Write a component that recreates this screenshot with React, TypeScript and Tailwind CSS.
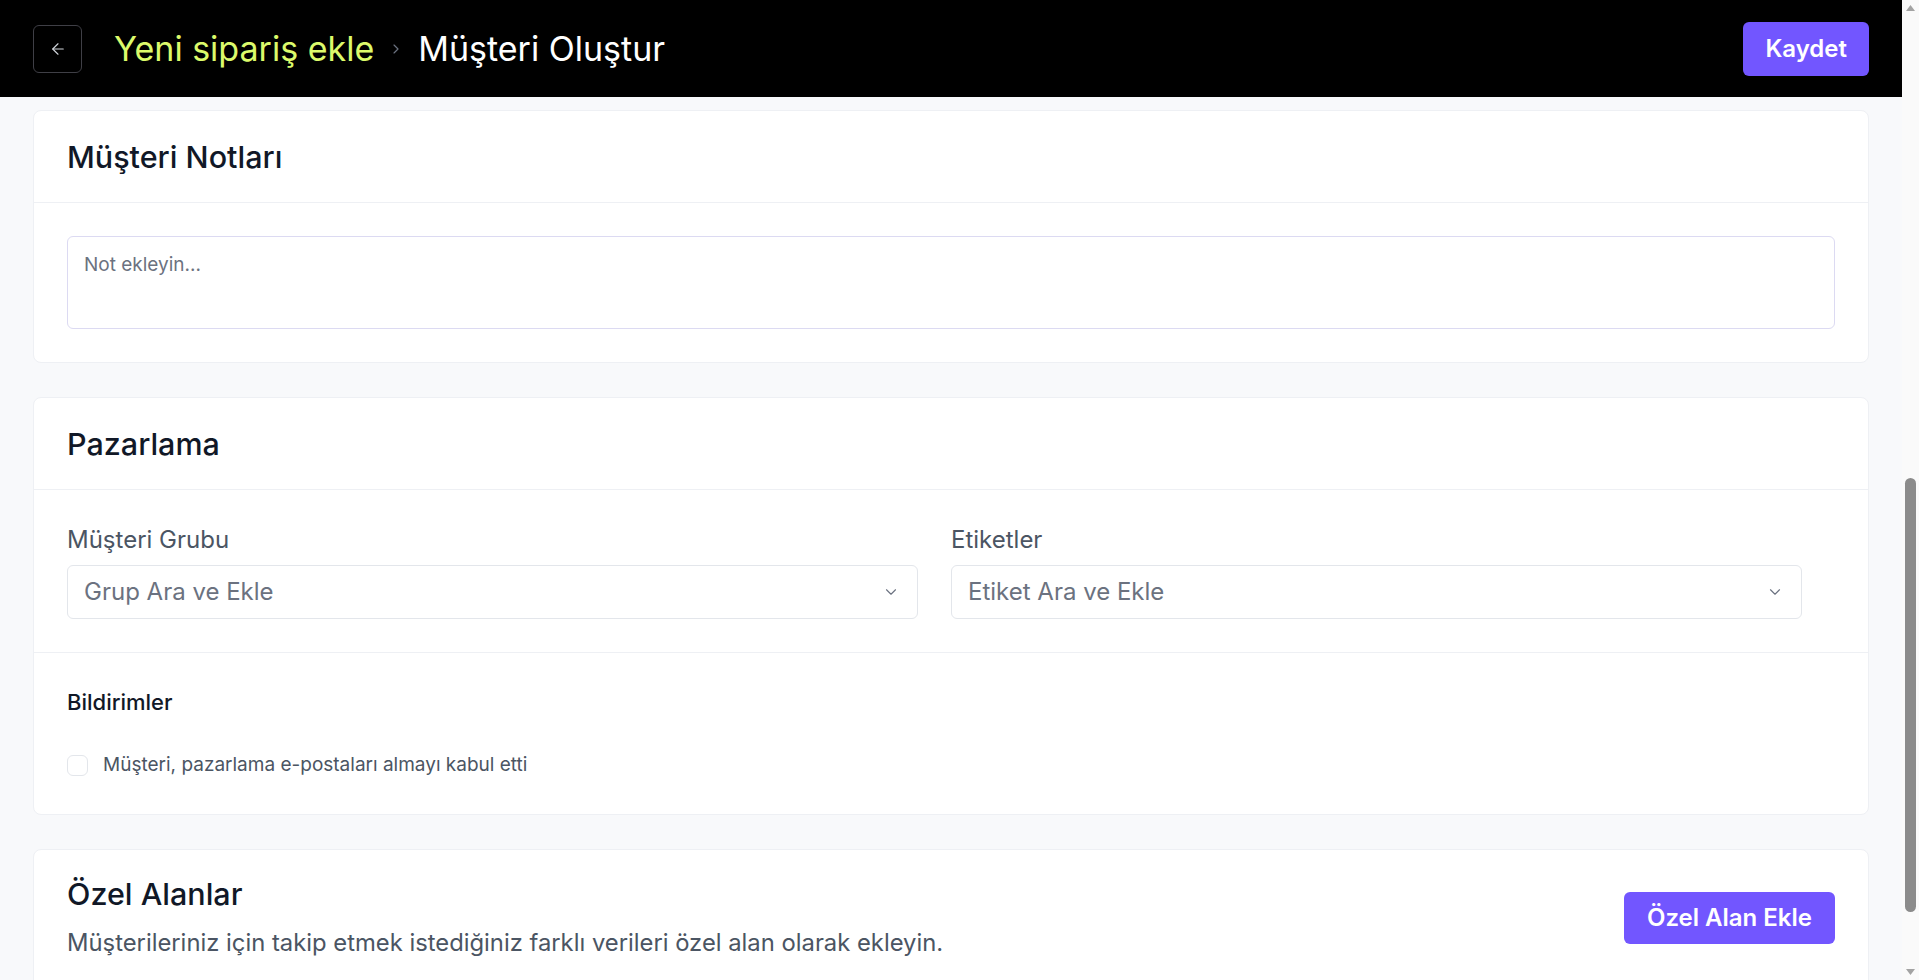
import React from "react";
import { ArrowLeft, ChevronRight, ChevronDown } from "lucide-react";

function SelectBox({ placeholder }: { placeholder: string }) {
  return (
    <div className="flex h-[54px] items-center justify-between rounded-md border border-[#E3E6EB] bg-white pl-[16px] pr-[17px]">
      <span className="text-[24px] leading-none text-[#6B7280]">{placeholder}</span>
      <ChevronDown size={18} strokeWidth={1.5} className="text-[#6B7280]" />
    </div>
  );
}

function FakeScrollbar() {
  return (
    <div className="fixed top-0 right-0 z-20 h-screen w-[17px] bg-[#FAFAFA]">
      <svg className="absolute top-[5px] left-[4px]" width="9" height="6" viewBox="0 0 9 6">
        <polygon points="4.5,0 9,6 0,6" fill="#A3A3A3" />
      </svg>
      <div className="absolute top-[478px] left-[3px] h-[434px] w-[11px] rounded-full bg-[#8B8B8B]" />
      <svg className="absolute bottom-[5px] left-[4px]" width="9" height="6" viewBox="0 0 9 6">
        <polygon points="0,0 9,0 4.5,6" fill="#A3A3A3" />
      </svg>
    </div>
  );
}

export default function App() {
  return (
    <div
      className="min-h-screen bg-[#F8F9FB] pr-[17px] text-[#111827]"
      style={{ fontFamily: "Inter, 'Noto Sans', sans-serif" }}
    >
      <FakeScrollbar />
      <header className="sticky top-0 z-10 flex h-[97px] items-center justify-between bg-black px-[33px]">
        <div className="flex items-center">
          <button className="flex h-[48px] w-[49px] items-center justify-center rounded-md border border-[#3F3F46] text-[#D1D5DB]">
            <ArrowLeft size={18} strokeWidth={1.5} />
          </button>
          <span className="ml-[32px] text-[34px] leading-none text-[#DCFA6B]">Yeni sipariş ekle</span>
          <ChevronRight size={16} strokeWidth={1.75} className="mx-[14px] text-[#6B7280]" />
          <span className="text-[34px] leading-none text-white">Müşteri Oluştur</span>
        </div>
        <button className="h-[54px] rounded-md bg-[#7256FF] px-[22px] text-[24px] font-semibold text-white">
          Kaydet
        </button>
      </header>

      <main className="flex flex-col gap-[34px] px-[33px] pt-[13px] pb-[40px]">
        <section className="rounded-lg border border-[#EEF0F4] bg-white">
          <div className="flex h-[92px] items-center border-b border-[#EEF0F4] px-[33px]">
            <h2 className="text-[30.5px] font-medium">Müşteri Notları</h2>
          </div>
          <div className="p-[33px]">
            <textarea
              placeholder="Not ekleyin..."
              className="block h-[93px] w-full resize-none rounded-md border border-[#DCDAF2] px-[16px] pt-[14px] pb-[16px] text-[19px] text-[#111827] outline-none placeholder:text-[#6B7280]"
            />
          </div>
        </section>

        <section className="rounded-lg border border-[#EEF0F4] bg-white">
          <div className="flex h-[92px] items-center border-b border-[#EEF0F4] px-[33px]">
            <h2 className="text-[30.5px] font-medium">Pazarlama</h2>
          </div>
          <div className="border-b border-[#EEF0F4] px-[33px] pt-[34px] pb-[33px]">
            <div className="grid grid-cols-2 gap-[33px] pr-[33px]">
              <div className="flex flex-col gap-[9px]">
                <label className="text-[24px] leading-[32px] text-[#4B5563]">Müşteri Grubu</label>
                <SelectBox placeholder="Grup Ara ve Ekle" />
              </div>
              <div className="flex flex-col gap-[9px]">
                <label className="text-[24px] leading-[32px] text-[#4B5563]">Etiketler</label>
                <SelectBox placeholder="Etiket Ara ve Ekle" />
              </div>
            </div>
          </div>
          <div className="px-[33px] pt-[35px] pb-[37px]">
            <h3 className="text-[22px] font-medium leading-[28px]">Bildirimler</h3>
            <label className="mt-[37px] flex items-center gap-[15px]">
              <span className="h-[21px] w-[21px] rounded-md border border-[#E3E6EB] bg-white" />
              <span className="text-[19px] leading-[24px] text-[#4B5563]">
                Müşteri, pazarlama e-postaları almayı kabul etti
              </span>
            </label>
          </div>
        </section>

        <section className="rounded-lg border border-[#EEF0F4] bg-white">
          <div className="flex items-center justify-between px-[33px] pt-[26px] pb-[28px]">
            <div>
              <h2 className="text-[30.5px] font-medium leading-[36px]">Özel Alanlar</h2>
              <p className="mt-[15px] text-[23.8px] leading-[32px] text-[#4B5563]">
                Müşterileriniz için takip etmek istediğiniz farklı verileri özel alan olarak ekleyin.
              </p>
            </div>
            <button className="h-[52px] rounded-md bg-[#7256FF] px-[23px] text-[24px] font-semibold text-white">
              Özel Alan Ekle
            </button>
          </div>
          <div className="h-[120px] border-t border-[#EEF0F4]" />
        </section>
      </main>
    </div>
  );
}
